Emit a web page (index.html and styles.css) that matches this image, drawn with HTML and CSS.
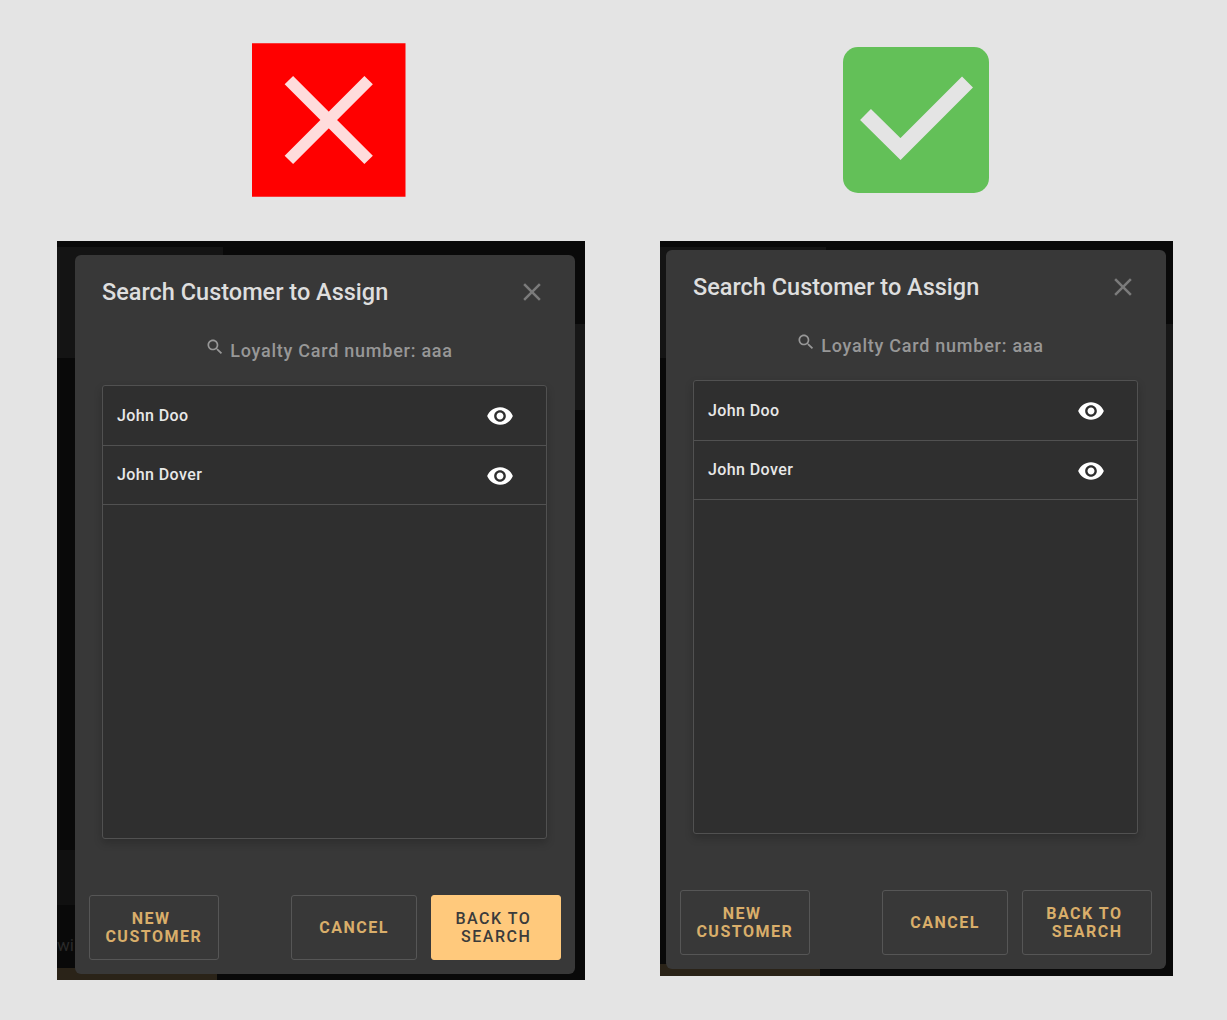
FILE: index.html
```html
<!DOCTYPE html>
<html lang="en">
<head>
    <meta charset="UTF-8">
    <meta name="viewport" content="width=device-width, initial-scale=1.0">
    <title>Search Customer to Assign</title>
    <link rel="stylesheet" href="styles.css">
</head>
<body>
    <svg class="icon-defs" aria-hidden="true">
        <symbol id="icon-eye" viewBox="0 0 24 24">
            <path d="M12 4.5C7 4.5 2.73 7.61 1 12c1.73 4.39 6 7.5 11 7.5s9.27-3.11 11-7.5c-1.73-4.39-6-7.5-11-7.5zM12 17c-2.76 0-5-2.24-5-5s2.24-5 5-5 5 2.24 5 5-2.24 5-5 5zm0-8c-1.66 0-3 1.34-3 3s1.34 3 3 3 3-1.34 3-3-1.34-3-3-3z"/>
        </symbol>
        <symbol id="icon-search" viewBox="0 0 24 24">
            <path d="M15.5 14h-.79l-.28-.27C15.41 12.59 16 11.11 16 9.5 16 5.91 13.09 3 9.5 3S3 5.91 3 9.5 5.91 16 9.5 16c1.61 0 3.09-.59 4.23-1.57l.27.28v.79l5 4.99L20.49 19l-4.99-5zm-6 0C7.01 14 5 11.99 5 9.5S7.01 5 9.5 5 14 7.01 14 9.5 11.99 14 9.5 14z"/>
        </symbol>
        <symbol id="icon-close" viewBox="0 0 24 24">
            <path d="M19 6.41L17.59 5 12 10.59 6.41 5 5 6.41 10.59 12 5 17.59 6.41 19 12 13.41 17.59 19 19 17.59 13.41 12z"/>
        </symbol>
    </svg>

    <div class="page">
        <section class="column column-wrong">
            <div class="verdict">
                <svg class="verdict-wrong" viewBox="0 0 154 154">
                    <rect width="154" height="154" fill="#ff0000"/>
                    <path d="M37 37L117 117M117 37L37 117" fill="none" stroke="#ffdcdc" stroke-width="12"/>
                </svg>
            </div>
            <div class="backdrop backdrop-wrong">
                <div class="ghost ghost-a"></div>
                <div class="ghost ghost-b"></div>
                <div class="ghost ghost-c"></div>
                <div class="ghost ghost-d"></div>
                <div class="ghost ghost-text">wi</div>
                <div class="dialog">
                    <div class="dialog-header">
                        <h2>Search Customer to Assign</h2>
                        <svg class="close-icon"><use href="#icon-close"/></svg>
                    </div>
                    <div class="search-term">
                        <svg class="search-icon"><use href="#icon-search"/></svg>
                        <span>Loyalty Card number: aaa</span>
                    </div>
                    <div class="customer-list">
                        <div class="customer-row">
                            <span>John Doo</span>
                            <svg class="eye-icon"><use href="#icon-eye"/></svg>
                        </div>
                        <div class="customer-row">
                            <span>John Dover</span>
                            <svg class="eye-icon"><use href="#icon-eye"/></svg>
                        </div>
                    </div>
                    <div class="dialog-footer">
                        <button class="btn btn-new">New&nbsp;<br>Customer</button>
                        <button class="btn btn-cancel">Cancel</button>
                        <button class="btn btn-back btn-focused">Back to&nbsp;<br>Search</button>
                    </div>
                </div>
            </div>
        </section>

        <section class="column column-right">
            <div class="verdict">
                <svg class="verdict-right" viewBox="0 0 146 146">
                    <rect width="146" height="146" rx="15" fill="#63c058"/>
                    <path d="M22.5 67.5L57.5 102L124.5 35" fill="none" stroke="#e4e4e4" stroke-width="15.5"/>
                </svg>
            </div>
            <div class="backdrop backdrop-right">
                <div class="ghost ghost-a"></div>
                <div class="ghost ghost-b"></div>
                <div class="ghost ghost-c"></div>
                <div class="dialog">
                    <div class="dialog-header">
                        <h2>Search Customer to Assign</h2>
                        <svg class="close-icon"><use href="#icon-close"/></svg>
                    </div>
                    <div class="search-term">
                        <svg class="search-icon"><use href="#icon-search"/></svg>
                        <span>Loyalty Card number: aaa</span>
                    </div>
                    <div class="customer-list">
                        <div class="customer-row">
                            <span>John Doo</span>
                            <svg class="eye-icon"><use href="#icon-eye"/></svg>
                        </div>
                        <div class="customer-row">
                            <span>John Dover</span>
                            <svg class="eye-icon"><use href="#icon-eye"/></svg>
                        </div>
                    </div>
                    <div class="dialog-footer">
                        <button class="btn btn-new">New&nbsp;<br>Customer</button>
                        <button class="btn btn-cancel">Cancel</button>
                        <button class="btn btn-back">Back to&nbsp;<br>Search</button>
                    </div>
                </div>
            </div>
        </section>
    </div>
</body>
</html>
```

FILE: styles.css
```css
body {
    margin: 0;
    background-color: #e4e4e4;
    font-family: Roboto, "Liberation Sans", sans-serif;
}

.icon-defs {
    display: none;
}

.page {
    display: flex;
    gap: 75px;
    padding: 43px 0 0 57px;
}

.column {
    display: flex;
    flex-direction: column;
}

.column-wrong {
    width: 528px;
}

.column-right {
    width: 513px;
}

.verdict {
    display: flex;
    align-items: center;
    height: 154px;
    margin-bottom: 44px;
}

.verdict-wrong {
    width: 153.5px;
    height: 154px;
    margin-left: 195px;
}

.verdict-right {
    width: 146px;
    height: 146px;
    margin-left: 183px;
}

.backdrop {
    position: relative;
    background-color: #090909;
    overflow: hidden;
}

.backdrop-wrong {
    padding: 14px 10px 6px 18px;
}

.backdrop-right {
    padding: 9px 7px 7px 6px;
}

/* blurred app showing through behind the dialog */
.ghost {
    position: absolute;
}

.ghost-a {
    left: 0;
    top: 6px;
    width: 166px;
    height: 111px;
    background-color: #141414;
}

.ghost-b {
    right: 0;
    top: 83px;
    width: 40px;
    height: 86px;
    background-color: #171717;
}

.ghost-c {
    left: 0;
    bottom: 0;
    width: 160px;
    height: 12px;
    background-color: #2a2318;
}

.ghost-d {
    left: 0;
    top: 609px;
    width: 166px;
    height: 55px;
    background-color: #101010;
}

.ghost-text {
    left: 0;
    bottom: 25px;
    font-size: 17px;
    color: #2a2a2a;
}

.dialog {
    position: relative;
    display: flex;
    flex-direction: column;
    width: 500px;
    height: 719px;
    background-color: #383838;
    border-radius: 6px;
}

.dialog-header {
    display: flex;
    align-items: center;
    justify-content: space-between;
    box-sizing: border-box;
    height: 72px;
    padding: 1px 28px 0 27px;
}

.dialog-header h2 {
    margin: 0;
    font-size: 23.5px;
    font-weight: 500;
    color: #dedede;
}

.close-icon {
    width: 30px;
    height: 30px;
    fill: #7b7b7b;
}

.search-term {
    display: flex;
    justify-content: center;
    align-items: center;
    gap: 5px;
    height: 46px;
    margin-bottom: 12px;
    padding-left: 8px;
    font-size: 18px;
    font-weight: 500;
    letter-spacing: 0.75px;
    color: #979797;
}

.search-icon {
    width: 20px;
    height: 20px;
    margin-bottom: 6px;
    fill: #979797;
}

.customer-list {
    box-sizing: border-box;
    width: 445px;
    height: 454px;
    margin-left: 27px;
    background-color: #2f2f2f;
    border: 1px solid #515151;
    border-radius: 3px;
    box-shadow: 0 4px 8px rgba(0, 0, 0, 0.2);
}

.customer-row {
    display: flex;
    align-items: center;
    justify-content: space-between;
    box-sizing: border-box;
    height: 59.5px;
    padding: 0 32px 0 14px;
    border-bottom: 1px solid #515151;
    font-size: 16px;
    font-weight: 500;
    letter-spacing: 0.4px;
    color: #e8e8e8;
}

.eye-icon {
    width: 28px;
    height: 28px;
    margin-top: 2px;
    fill: #ffffff;
}

.dialog-footer {
    display: flex;
    align-items: flex-start;
    gap: 14px;
    margin-top: 56px;
    padding: 0 14px;
}

.btn {
    box-sizing: border-box;
    height: 65px;
    padding: 0 8px;
    background-color: transparent;
    border: 1px solid #565656;
    border-radius: 3px;
    font-family: inherit;
    font-size: 16px;
    font-weight: 700;
    line-height: 18px;
    letter-spacing: 1.5px;
    text-transform: uppercase;
    color: #d9ae6a;
}

.btn-new {
    width: 130px;
    margin-right: 58px;
}

.btn-cancel {
    width: 127px;
}

.btn-back {
    width: 130px;
}

.btn-focused {
    background-color: #ffc97c;
    border-color: #ffc97c;
    font-weight: 500;
    color: #3b3b3b;
}
```
